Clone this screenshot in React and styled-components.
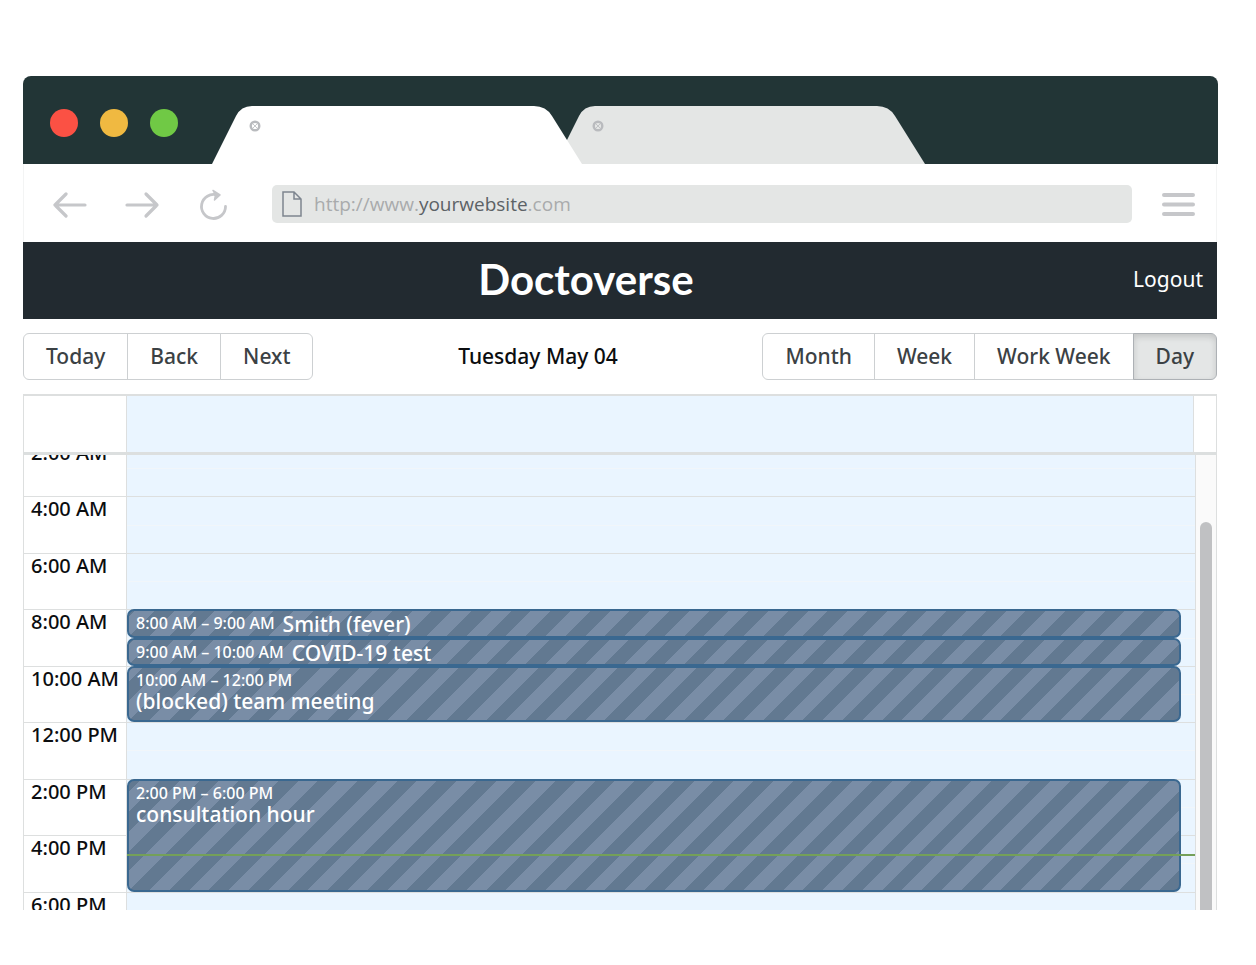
import React from "react";
import styled, { createGlobalStyle } from "styled-components";

const Global = createGlobalStyle`
  *, *::before, *::after { box-sizing: border-box; }
  body { margin: 0; background: #fff; color: #0b0d0f; font-family: "Noto Sans", "Open Sans", sans-serif; font-size: 20px; }
  button, input { font: inherit; }
`;

const Page = styled.main`padding: 76px 39px 55px 23px;`;
const Frame = styled.div`display: flex; flex-direction: column;`;

const TabBar = styled.div`
  display: flex; align-items: flex-end; height: 88px; padding-left: 27px; margin-right: -1px;
  background: #223536; border-radius: 8px 8px 0 0;
`;
const Lights = styled.div`display: flex; gap: 22px; align-self: center; margin-top: 6px; width: 162px;`;
const Light = styled.span`width: 28px; height: 28px; border-radius: 50%; background: ${(p) => p.$color};`;
const Tab = styled.div`
  position: relative; width: 370px; height: 58px; z-index: ${(p) => (p.$active ? 1 : 0)};
  margin-left: ${(p) => (p.$active ? 0 : "-27px")};
  svg { display: block; }
`;
const TabClose = styled.button`
  position: absolute; left: 37px; top: 14px; width: 12px; height: 12px; padding: 0; border: 0; background: none;
`;

const NavBar = styled.nav`
  display: flex; align-items: center; height: 78px; padding: 2px 21px 0 29px; background: #fff;
  border-left: 1px solid #f3f4f4; border-right: 1px solid #f3f4f4;
`;
const IconButton = styled.button`
  display: block; padding: 0; border: 0; background: none; flex: none; color: #c6c7ca;
  width: 36px; height: 36px; margin-right: ${(p) => p.$gap || 0}px;
  svg { display: block; }
`;
const Address = styled.a`
  flex: 1; display: flex; align-items: center; gap: 12px; height: 38px; padding-left: 10px;
  background: #e4e6e5; border-radius: 5px; color: #a9abac; font-size: 19px; line-height: 24px;
  font-family: "Open Sans", sans-serif; text-decoration: none; margin-right: 27px;
  b { font-weight: 500; color: #5c6266; }
`;

const Header = styled.header`
  display: grid; grid-template-columns: 1fr auto 1fr; align-items: center; height: 77px;
  padding: 0 14px 4px 0; background: #222a30; color: #fff;
`;
const Brand = styled.h1`
  grid-column: 2; margin: 0 54px 0 0; font-family: Lato, sans-serif; font-size: 42px; line-height: 48px; font-weight: 700;
`;
const Logout = styled.a`justify-self: end; color: #fff; text-decoration: none; font-size: 21px; line-height: 28px;`;

const Toolbar = styled.div`display: flex; align-items: center; padding: 14px 0;`;
const ButtonGroup = styled.div`display: flex;`;
const ToolButton = styled.button`
  height: 47px; padding: 0 22px 2px; margin-left: -1px; background: #fff; border: 1px solid #cdd0d2; color: #3b4144;
  font-size: 21px; line-height: 28px; font-weight: 500; white-space: nowrap;
  &:first-child { margin-left: 0; border-radius: 6px 0 0 6px; }
  &:last-child { border-radius: 0 6px 6px 0; }
  &[aria-pressed="true"] { background: #e4e6e6; border-color: #adb1b5; box-shadow: inset 0 3px 6px rgba(0, 0, 0, 0.14); }
`;
const DateLabel = styled.h2`flex: 1; margin: 0; padding-bottom: 2px; text-align: center; font-size: 21px; line-height: 28px; font-weight: 500;`;

const Calendar = styled.section`border: solid #dddfdf; border-width: 2px 1px 0;`;
const AllDay = styled.div`
  display: grid; grid-template-columns: 102px 1fr 22px; height: 59px; border-bottom: 3px solid #dcdfdf;
`;
const AllDayCell = styled.div`background: #eaf5ff; border: solid #dddfdf; border-width: 0 1px;`;
const TimeView = styled.div`
  display: grid; grid-template-columns: 102px 1fr 20px; height: 455px; overflow: hidden;
`;
const Gutter = styled.div`display: grid; grid-template-rows: repeat(9, 1fr); height: 508px; margin-top: -15px;`;
const TimeLabel = styled.div`
  border-top: 1px solid #dddfdf; padding: 0 7px; font-size: 20px; line-height: 24px; font-weight: 500; white-space: nowrap;
`;
const DayColumn = styled.div`
  position: relative; display: grid; grid-template-rows: repeat(18, 1fr); height: 508px; margin-top: -15px;
  border: solid #dddfdf; border-width: 0 1px; background: #eaf5ff;
`;
const Slot = styled.div`
  grid-area: ${(p) => p.$row} / 1; border-top: 1px solid ${(p) => (p.$row % 2 ? "#dddfdf" : "#f1f6fa")};
`;
const Event = styled.article`
  grid-area: ${(p) => p.$from} / 1 / ${(p) => p.$to} / 2; margin-right: 14px; z-index: 1; overflow: hidden;
  display: flex; flex-direction: ${(p) => (p.$to - p.$from > 1 ? "column" : "row")};
  column-gap: 8px; padding: 1px 7px; border: 2px solid #3a6890; border-radius: 7px; color: #fff;
  background: repeating-linear-gradient(-45deg, #627991, #627991 14px, #798da6 14px, #798da6 28px);
`;
const EventTime = styled.span`font-size: 16px; line-height: 22px; font-weight: 500; white-space: nowrap;`;
const EventTitle = styled.span`
  font-size: 21px; font-weight: 500; white-space: nowrap; line-height: ${(p) => (p.$stacked ? 20 : 24)}px;
`;
const NowLine = styled.div`position: absolute; z-index: 2; left: 0; right: 0; height: 2px; background: #74a059;`;
const ScrollTrack = styled.div`background: #fafafa; padding: 67px 4px 0;`;
const ScrollThumb = styled.div`height: 100%; border-radius: 6px 6px 0 0; background: #c0c1c3;`;

const hours = ["2:00 AM", "4:00 AM", "6:00 AM", "8:00 AM", "10:00 AM", "12:00 PM", "2:00 PM", "4:00 PM", "6:00 PM"];
const events = [
  { from: 7, to: 8, time: "8:00 AM – 9:00 AM", title: "Smith (fever)" },
  { from: 8, to: 9, time: "9:00 AM – 10:00 AM", title: "COVID-19 test" },
  { from: 9, to: 11, time: "10:00 AM – 12:00 PM", title: "(blocked) team meeting" },
  { from: 13, to: 17, time: "2:00 PM – 6:00 PM", title: "consultation hour" },
];
// hours elapsed since the first visible label
const now = 14.67;

function BrowserTab({ active }) {
  return (
    <Tab $active={active}>
      <svg width="370" height="58" viewBox="0 0 370 58" aria-hidden="true">
        <path d="M0 58 L24 10 Q29 0 40 0 H322 Q334 0 340 10 L370 58 Z" fill={active ? "#fff" : "#e4e6e5"} />
      </svg>
      <TabClose aria-label="Close tab">
        <svg width="12" height="12" viewBox="0 0 12 12" fill="none" stroke="#b9bbbe" strokeWidth="2.4">
          <circle cx="6" cy="6" r="4.3" />
          <path d="M4 4l4 4M8 4l-4 4" strokeWidth="0.8" />
        </svg>
      </TabClose>
    </Tab>
  );
}

const line = { fill: "none", stroke: "currentColor", strokeWidth: 3.2, strokeLinecap: "round", strokeLinejoin: "round" };

export default function App() {
  return (
    <Page>
      <Global />
      <Frame>
        <TabBar>
          <Lights>
            <Light $color="#fb5144" />
            <Light $color="#f0b941" />
            <Light $color="#70c945" />
          </Lights>
          <BrowserTab active />
          <BrowserTab />
        </TabBar>
        <NavBar>
          <IconButton aria-label="Back" $gap={36}>
            <svg width="36" height="36" viewBox="0 0 36 36" {...line}><path d="M32 19H2M13 8L2 19L13 30" /></svg>
          </IconButton>
          <IconButton aria-label="Forward" $gap={36}>
            <svg width="36" height="36" viewBox="0 0 36 36" {...line}><path d="M2 19H32M21 8L32 19L21 30" /></svg>
          </IconButton>
          <IconButton aria-label="Reload" $gap={39}>
            <svg width="36" height="36" viewBox="0 0 36 36" {...line} strokeWidth="2.8">
              <path d="M28.500 20.500A12 12 0 1 1 20 9" />
              <path d="M16 4.500L23 9L17.500 14L18.500 9Z" fill="currentColor" strokeWidth="1.500" />
            </svg>
          </IconButton>
          <Address href="#">
            <svg width="20" height="26" viewBox="0 0 20 26" fill="none" stroke="#7d858f" strokeWidth="1.500" aria-hidden="true">
              <path d="M1 1H12L19 8V25H1ZM12 1V8H19" />
            </svg>
            <span>http://www.<b>yourwebsite</b>.com</span>
          </Address>
          <IconButton aria-label="Menu">
            <svg width="36" height="36" viewBox="0 0 36 36" {...line} strokeWidth="4"><path d="M5 9H34M5 18.500H34M5 28H34" /></svg>
          </IconButton>
        </NavBar>
        <Header>
          <Brand>Doctoverse</Brand>
          <Logout href="#">Logout</Logout>
        </Header>
        <Toolbar>
          <ButtonGroup>
            {["Today", "Back", "Next"].map((t) => <ToolButton key={t}>{t}</ToolButton>)}
          </ButtonGroup>
          <DateLabel>Tuesday May 04</DateLabel>
          <ButtonGroup>
            {["Month", "Week", "Work Week", "Day"].map((t) => (
              <ToolButton key={t} aria-pressed={t === "Day"}>{t}</ToolButton>
            ))}
          </ButtonGroup>
        </Toolbar>
        <Calendar>
          <AllDay><div /><AllDayCell /><div /></AllDay>
          <TimeView>
            <Gutter>{hours.map((h) => <TimeLabel key={h}>{h}</TimeLabel>)}</Gutter>
            <DayColumn>
              {Array.from({ length: 18 }, (_, i) => <Slot key={i} $row={i + 1} />)}
              {events.map((e) => (
                <Event key={e.time} $from={e.from} $to={e.to}>
                  <EventTime>{e.time}</EventTime>
                  <EventTitle $stacked={e.to - e.from > 1}>{e.title}</EventTitle>
                </Event>
              ))}
              <NowLine style={{ top: `${(now / 18) * 100}%` }} />
            </DayColumn>
            <ScrollTrack><ScrollThumb /></ScrollTrack>
          </TimeView>
        </Calendar>
      </Frame>
    </Page>
  );
}
